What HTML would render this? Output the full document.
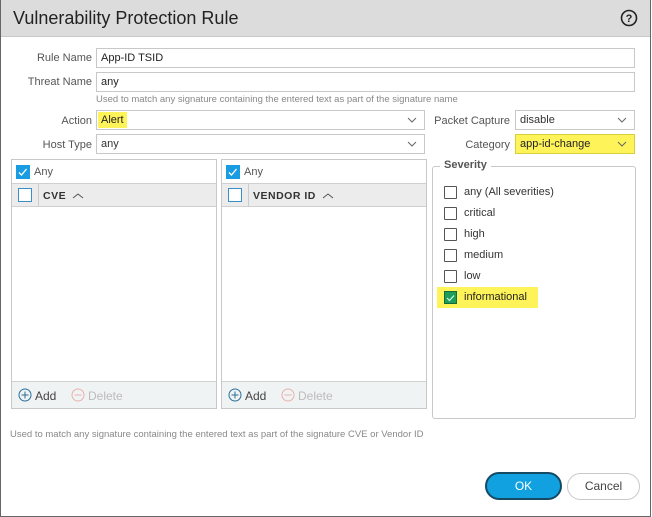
<!DOCTYPE html><html><head><style>
*{box-sizing:border-box;margin:0;padding:0}
body{width:652px;height:517px;background:#fff;font-family:"Liberation Sans",sans-serif;font-size:11px;color:#333;position:relative;overflow:hidden}
.a{position:absolute}
.frame{left:0;top:0;width:651px;height:517px;border:1px solid #666;border-top:none}
.title{left:1px;top:0;width:649px;height:37px;background:#dcdcdc;border-bottom:1px solid #c8c8c8}
.lbl{text-align:right;width:92px;left:0;color:#555}
.in{border:1px solid #c8c8c8;height:20px;padding:3px 4px;background:#fff}
.chev{position:absolute;right:6px;top:3px;width:12px;height:12px}
.cb{width:13px;height:13px;border:1.5px solid #555;border-radius:1px;background:#fff}
.bcb{width:14px;height:14px;border:1.5px solid #3a8fc8;background:#fff}
.cbx{width:14px;height:14px;background:#1a9ce2}
.panel{border:1px solid #c8c8c8}
</style></head><body>
<div class="a frame"></div>
<div class="a title"></div>
<div class="a" style="left:13px;top:8px;font-size:18px;color:#222">Vulnerability Protection Rule</div>
<svg class="a" style="left:620px;top:9px" width="18" height="18"><circle cx="9" cy="9" r="7.5" fill="none" stroke="#222" stroke-width="1.6"/><text x="9" y="13" font-size="11" font-weight="bold" text-anchor="middle" fill="#222" font-family="Liberation Sans">?</text></svg>

<div class="a lbl" style="top:52px">Rule Name</div>
<div class="a in" style="left:96px;top:48px;width:539px;color:#222">App-ID TSID</div>
<div class="a lbl" style="top:76px">Threat Name</div>
<div class="a in" style="left:96px;top:72px;width:539px;color:#222">any</div>
<div class="a" style="left:96px;top:94px;font-size:9.5px;color:#888">Used to match any signature containing the entered text as part of the signature name</div>
<div class="a lbl" style="top:115px">Action</div>
<div class="a in" style="left:96px;top:110px;width:329px;padding:0"><span class="a" style="left:1px;top:1px;height:16px;background:#fff35a;padding:2px 3px;color:#222">Alert</span><svg class="chev" viewBox="0 0 12 12"><path d="M2 4l4 4 4-4" fill="none" stroke="#666"/></svg></div>
<div class="a lbl" style="top:139px">Host Type</div>
<div class="a in" style="left:96px;top:134px;width:329px">any<svg class="chev" viewBox="0 0 12 12"><path d="M2 4l4 4 4-4" fill="none" stroke="#666"/></svg></div>
<div class="a" style="left:420px;top:115px;width:90px;text-align:right;color:#555">Packet Capture</div>
<div class="a in" style="left:515px;top:110px;width:120px">disable<svg class="chev" viewBox="0 0 12 12"><path d="M2 4l4 4 4-4" fill="none" stroke="#666"/></svg></div>
<div class="a" style="left:420px;top:139px;width:90px;text-align:right;color:#555">Category</div>
<div class="a in" style="left:515px;top:134px;width:120px;background:#fff35a;border-color:#d8cf3a;color:#222">app-id-change<svg class="chev" viewBox="0 0 12 12"><path d="M2 4l4 4 4-4" fill="none" stroke="#666"/></svg></div>

<div class="a panel" style="left:11px;top:159px;width:206px;height:250px">
 <div class="a cbx" style="left:4px;top:5px"><svg width="14" height="14"><path d="M3 7.5l2.5 2.5 5-6" fill="none" stroke="#fff" stroke-width="1.3"/></svg></div>
 <div class="a" style="left:22px;top:6px;color:#555">Any</div>
 <div class="a" style="left:0;top:23px;width:204px;height:24px;background:#ececec;border-top:1px solid #d0d0d0;border-bottom:1px solid #d0d0d0"></div>
 <div class="a bcb" style="left:6px;top:28px"></div>
 <div class="a" style="left:26px;top:23px;width:1px;height:24px;background:#ccc"></div>
 <div class="a" style="left:31px;top:30px;font-weight:bold;font-size:10.5px;letter-spacing:.5px;color:#333">CVE</div>
 <svg class="a" style="left:60px;top:32px" width="12" height="8"><path d="M1 6l5-4 5 4" fill="none" stroke="#555"/></svg>
 <div class="a" style="left:0;top:221px;width:204px;height:27px;background:#f0f3f3;border-top:1px solid #d0d0d0"></div>
 <svg class="a" style="left:6px;top:228px" width="14" height="14"><circle cx="7" cy="7" r="6" fill="none" stroke="#2a6e9a"/><path d="M7 3.5v7M3.5 7h7" stroke="#2a6e9a"/></svg>
 <div class="a" style="left:23px;top:229px;font-size:12px;color:#444">Add</div>
 <svg class="a" style="left:59px;top:228px" width="14" height="14"><circle cx="7" cy="7" r="6" fill="none" stroke="#e9b0ae"/><path d="M3.5 7h7" stroke="#e9b0ae"/></svg>
 <div class="a" style="left:76px;top:229px;font-size:12px;color:#bbb">Delete</div>
</div>
<div class="a panel" style="left:221px;top:159px;width:206px;height:250px">
 <div class="a cbx" style="left:4px;top:5px"><svg width="14" height="14"><path d="M3 7.5l2.5 2.5 5-6" fill="none" stroke="#fff" stroke-width="1.3"/></svg></div>
 <div class="a" style="left:22px;top:6px;color:#555">Any</div>
 <div class="a" style="left:0;top:23px;width:204px;height:24px;background:#ececec;border-top:1px solid #d0d0d0;border-bottom:1px solid #d0d0d0"></div>
 <div class="a bcb" style="left:6px;top:28px"></div>
 <div class="a" style="left:26px;top:23px;width:1px;height:24px;background:#ccc"></div>
 <div class="a" style="left:31px;top:30px;font-weight:bold;font-size:10.5px;letter-spacing:.5px;color:#333">VENDOR ID</div>
 <svg class="a" style="left:100px;top:32px" width="12" height="8"><path d="M1 6l5-4 5 4" fill="none" stroke="#555"/></svg>
 <div class="a" style="left:0;top:221px;width:204px;height:27px;background:#f0f3f3;border-top:1px solid #d0d0d0"></div>
 <svg class="a" style="left:6px;top:228px" width="14" height="14"><circle cx="7" cy="7" r="6" fill="none" stroke="#2a6e9a"/><path d="M7 3.5v7M3.5 7h7" stroke="#2a6e9a"/></svg>
 <div class="a" style="left:23px;top:229px;font-size:12px;color:#444">Add</div>
 <svg class="a" style="left:59px;top:228px" width="14" height="14"><circle cx="7" cy="7" r="6" fill="none" stroke="#e9b0ae"/><path d="M3.5 7h7" stroke="#e9b0ae"/></svg>
 <div class="a" style="left:76px;top:229px;font-size:12px;color:#bbb">Delete</div>
</div>

<div class="a" style="left:432px;top:166px;width:204px;height:253px;border:1px solid #c8c8c8;border-radius:3px"></div>
<div class="a" style="left:440px;top:159px;background:#fff;padding:0 4px;font-weight:bold;color:#555">Severity</div>
<div class="a" style="left:437px;top:287px;width:101px;height:21px;background:#fff35a"></div>
<div class="a cb" style="left:444px;top:186px"></div><div class="a" style="left:464px;top:186px">any (All severities)</div>
<div class="a cb" style="left:444px;top:207px"></div><div class="a" style="left:464px;top:207px">critical</div>
<div class="a cb" style="left:444px;top:228px"></div><div class="a" style="left:464px;top:228px">high</div>
<div class="a cb" style="left:444px;top:249px"></div><div class="a" style="left:464px;top:249px">medium</div>
<div class="a cb" style="left:444px;top:270px"></div><div class="a" style="left:464px;top:270px">low</div>
<div class="a" style="left:444px;top:291px;width:13px;height:13px;background:#1e9c5a;border:1px solid #116b3b"><svg width="11" height="11" style="display:block"><path d="M2 6l2.5 2.5 4.5-5" fill="none" stroke="#cfe" stroke-width="1.2"/></svg></div>
<div class="a" style="left:464px;top:291px;color:#222">informational</div>

<div class="a" style="left:10px;top:429px;font-size:9.5px;color:#888">Used to match any signature containing the entered text as part of the signature CVE or Vendor ID</div>

<div class="a" style="left:485px;top:472px;width:77px;height:28px;border-radius:14px;background:#11a1e0;border:2px solid #164a63;color:#fff;text-align:center;line-height:24px;font-size:12px">OK</div>
<div class="a" style="left:567px;top:473px;width:73px;height:27px;border-radius:14px;background:#fff;border:1px solid #c8c8c8;color:#444;text-align:center;line-height:25px;font-size:12px">Cancel</div>
</body></html>
